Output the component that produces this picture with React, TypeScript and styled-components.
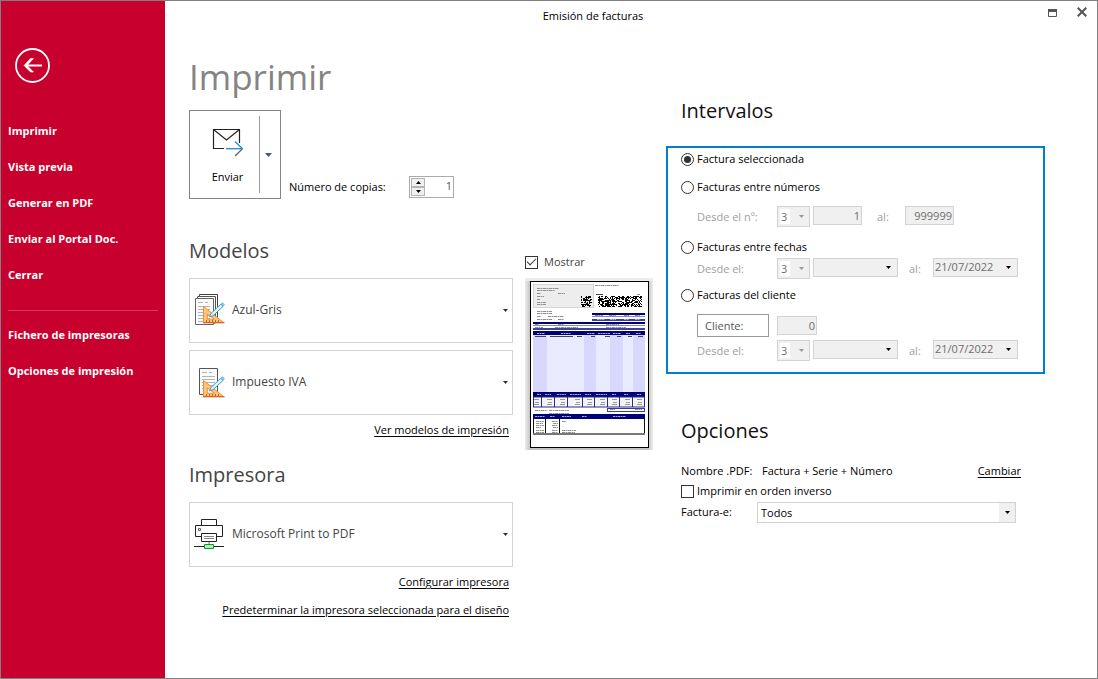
import React from 'react';
import styled, { createGlobalStyle, css } from 'styled-components';

const GlobalStyle = createGlobalStyle`
  *, *::before, *::after { box-sizing: border-box; }
  body {
    margin: 0;
    background: #fff;
    color: #000;
    font: 11px/16px "Open Sans", "Noto Sans", sans-serif;
  }
  button, input, select { font: inherit; color: inherit; margin: 0; }
  h1, h2 { margin: 0; font-weight: 400; }
  svg { display: block; flex: none; }
`;

const Window = styled.div`
  display: flex;
  min-height: 100vh;
  border: 1px solid #808080;
`;

/* Sidebar */
const Sidebar = styled.aside`
  flex: none;
  width: 164px;
  padding: 47px 7px 0;
  background: #c8002d;
  color: #fff;
`;

const BackButton = styled.button`
  display: block;
  width: 35px;
  height: 35px;
  margin: 0 0 30px 7px;
  padding: 0;
  border: 0;
  background: none;
`;

const NavLink = styled.a`
  display: block;
  color: #fff;
  font-weight: 700;
  line-height: 36px;
  text-decoration: none;
`;

const NavDivider = styled.hr`
  height: 1px;
  margin: 17px 0 6px;
  border: 0;
  background: #d63a5c;
`;

/* Main area */
const Main = styled.main`
  flex: 1;
  min-width: 0;
`;

const TitleBar = styled.header`
  display: flex;
  height: 32px;
`;

const WindowTitle = styled.div`
  flex: 1;
  line-height: 30px;
  text-align: center;
`;

const WindowControls = styled.div`
  display: flex;
  justify-content: flex-end;
  width: 76px;
`;

const WindowButton = styled.button`
  display: flex;
  justify-content: center;
  width: 30px;
  height: 24px;
  padding: 6px 0 0;
  border: 0;
  background: none;
`;

const Content = styled.div`
  display: grid;
  grid-template-columns: minmax(0, 1fr) 379px;
  gap: 13px;
  align-items: start;
  padding: 0 52px 24px 24px;
`;

const PrintColumn = styled.section`
  padding-top: 22px;
`;

const RangeColumn = styled.section`
  padding-top: 64px;
`;

const PageTitle = styled.h1`
  color: #848484;
  font-size: 35px;
  line-height: 44px;
`;

const SectionTitle = styled.h2<{ $muted?: boolean }>`
  color: ${(p) => (p.$muted ? '#444' : '#111')};
  font-size: 20px;
  line-height: 28px;
`;

const SendRow = styled.div`
  display: flex;
  align-items: flex-end;
  gap: 8px;
  margin: 11px 0 38px;
`;

const SplitButton = styled.div`
  display: flex;
  align-items: center;
  width: 92px;
  height: 89px;
  border: 1px solid #848484;
`;

const SendButton = styled.button`
  display: flex;
  flex: 1;
  flex-direction: column;
  align-items: center;
  gap: 11px;
  height: 77px;
  padding: 12px 0 0 6px;
  border: 0;
  border-right: 1px solid #999;
  background: none;
`;

const SendMenuButton = styled.button`
  display: flex;
  align-items: center;
  justify-content: center;
  width: 20px;
  height: 77px;
  padding: 0 3px 0 0;
  border: 0;
  background: none;
`;

const Copies = styled.div`
  display: flex;
  align-items: center;
  padding-bottom: 1px;
`;

const CopiesLabel = styled.label`
  width: 120px;
`;

const Spinner = styled.div`
  display: flex;
  align-items: center;
  width: 45px;
  height: 22px;
  padding-left: 1px;
  border: 1px solid #ababab;
`;

const SpinnerButtons = styled.div`
  display: flex;
  flex-direction: column;
  flex: none;
  width: 14px;
`;

const SpinnerButton = styled.button`
  display: flex;
  align-items: center;
  justify-content: center;
  height: 9px;
  padding: 0;
  border: 1px solid #b4b4b4;
  background: #f0f0f0;
`;

const SpinnerInput = styled.input`
  flex: 1;
  width: 0;
  height: 18px;
  padding: 0 1px 4px;
  border: 0;
  color: #555;
  text-align: right;
`;

const PrintLayout = styled.div`
  display: grid;
  grid-template-columns: minmax(0, 1fr) 128px;
  gap: 12px;
  align-items: start;
`;

const Group = styled.section`
  & + & { margin-top: 23px; }
`;

const Cards = styled.div`
  display: grid;
  gap: 7px;
  margin: 13px 0 7px;
`;

const Card = styled.button`
  display: flex;
  align-items: center;
  gap: 6px;
  height: 65px;
  padding: 0 4px 1px;
  border: 1px solid #d3d3d3;
  background: #fff;
  color: #444;
  text-align: left;
`;

const CardName = styled.span`
  flex: 1;
  font-size: 12px;
`;

const Links = styled.div`
  display: flex;
  flex-direction: column;
  align-items: flex-end;
  gap: 12px;
  padding-right: 4px;
`;

const Link = styled.a`
  color: #000;
  text-decoration: underline;
  text-underline-offset: 2px;
`;

const Preview = styled.div`
  display: grid;
  gap: 8px;
  padding-top: 17px;
`;

const box = css`
  appearance: none;
  display: grid;
  place-content: center;
  flex: none;
  width: 13px;
  height: 13px;
  border: 1px solid #333;
  background: #fff;
`;

const Checkbox = styled.input.attrs({ type: 'checkbox' })`
  ${box}
  &:checked::before {
    content: '';
    width: 9px;
    height: 5px;
    margin-top: -3px;
    border: solid #333;
    border-width: 0 0 1px 1px;
    transform: rotate(-45deg);
  }
`;

const Radio = styled.input.attrs({ type: 'radio' })`
  ${box}
  border-radius: 50%;
  &:checked::before {
    content: '';
    width: 7px;
    height: 7px;
    border-radius: 50%;
    background: #333;
  }
`;

const CheckLabel = styled.label<{ $wide?: boolean }>`
  display: flex;
  align-items: center;
  gap: ${(p) => (p.$wide ? 6 : 3)}px;
  color: ${(p) => (p.$wide ? '#444' : '#000')};
`;

/* Ranges */
const RangeHeading = styled.div`
  padding-left: 15px;
`;

const RangeBox = styled.fieldset`
  min-width: 0;
  margin: 21px 0 43px;
  padding: 1px 12px 11px 13px;
  border: 2px solid #0080c8;
`;

const Choice = styled.div<{ $before?: number; $after?: number }>`
  display: flex;
  height: 20px;
  margin: ${(p) => p.$before || 0}px 0 ${(p) => p.$after || 0}px;
`;

const FieldRow = styled.div`
  display: flex;
  align-items: flex-start;
  height: 21px;
  padding-left: 16px;
  color: #a0a0a0;
`;

const ClientRow = styled(FieldRow)`
  height: 23px;
  margin-bottom: 3px;
  gap: 8px;
`;

const RangeLabel = styled.label`
  width: 80px;
  line-height: 22px;
`;

const ToLabel = styled.label<{ $wide?: boolean }>`
  width: ${(p) => (p.$wide ? 43 : 35)}px;
  padding-left: ${(p) => (p.$wide ? 15 : 11)}px;
  line-height: 22px;
`;

const ClientButton = styled.button`
  width: 72px;
  height: 23px;
  padding: 0 7px;
  border: 1px solid #999;
  background: #fff;
  color: #555;
  text-align: left;
`;

const NumberInput = styled.input<{ $w: number }>`
  width: ${(p) => p.$w}px;
  height: 19px;
  margin-top: ${(p) => (p.$w === 40 ? 2 : 0)}px;
  padding: 0 1px 1px;
  border: 1px solid #d3d3d3;
  background: #f0f0f0;
  color: #6d6d6d;
  text-align: right;
`;

const SelectFrame = styled.div<{ $kind: 'series' | 'date' | 'full' }>`
  display: grid;
  align-items: center;
  & > * { grid-area: 1 / 1; }
  & > svg { justify-self: end; pointer-events: none; }
  ${(p) => p.$kind === 'series' && css`width: 33px; height: 21px; margin-right: 3px; & > svg { margin-right: 6px; }`}
  ${(p) => p.$kind === 'date' && css`width: 85px; height: 19px; & > svg { margin-right: 7px; }`}
  ${(p) => p.$kind === 'full' && css`flex: 1; height: 21px; & > svg { margin-right: 6px; }`}
`;

const Select = styled.select<{ $kind: 'series' | 'date' | 'full' }>`
  appearance: none;
  width: 100%;
  height: 100%;
  padding: 0 3px;
  border: 1px solid #d3d3d3;
  border-radius: 0;
  background: #f0f0f0;
  color: #6d6d6d;
  opacity: 1;
  ${(p) => p.$kind === 'series' && css`
    background: linear-gradient(#fff, #fff) 2px 2px / 10px 15px no-repeat #f0f0f0;
  `}
  ${(p) => p.$kind === 'date' && css`padding: 0 1px 1px;`}
  ${(p) => p.$kind === 'full' && css`
    padding: 1px 3px 0;
    background: linear-gradient(#f0f0f0, #f0f0f0) right / 16px 100% no-repeat #fff;
    color: #000;
  `}
`;

/* Options */
const Options = styled.section`
  padding: 0 24px 0 15px;
`;

const OptionRows = styled.div`
  display: grid;
  grid-template-rows: 20px 20px 22px;
  align-items: center;
  margin-top: 16px;
`;

const OptionRow = styled.div`
  display: flex;
  align-items: center;
`;

const OptionLabel = styled.label<{ $w: number }>`
  width: ${(p) => p.$w}px;
`;

const OptionValue = styled.span`
  flex: 1;
`;

const SelectSpace = styled(OptionRow)`
  padding-right: 5px;
`;

function Caret({ color = '#000', w = 5 }: { color?: string; w?: number }) {
  const h = (w + 1) / 2;
  return (
    <svg width={w} height={h} viewBox={`0 0 ${w} ${h}`} aria-hidden="true">
      <path d={`M0 0H${w}L${w / 2} ${h}Z`} fill={color} />
    </svg>
  );
}

function BackIcon() {
  return (
    <svg width="35" height="35" viewBox="0 0 35 35" fill="none" stroke="#fff" aria-hidden="true">
      <circle cx="17.5" cy="17.5" r="16.5" strokeWidth="1.8" />
      <path d="M27 17.5H11" strokeWidth="2" />
      <path d="M18.5 10.5h-3L9 17.5l6.500 6.500h3l-6.500-6.500z" fill="#fff" strokeWidth=".6" />
    </svg>
  );
}

function EnvelopeIcon() {
  return (
    <svg width="32" height="30" viewBox="0 0 32 30" fill="none" aria-hidden="true">
      <path d="M12 20.500H1.500V1.500H27.500V15" stroke="#222" strokeWidth="1.200" />
      <path d="M1.500 1.500L14.500 12L27.500 1.500" stroke="#222" strokeWidth="1.200" />
      <path d="M23 13.500L30.500 20.700" stroke="#1a8fd0" strokeWidth="1.300" />
      <path d="M14 20.700H30.500" stroke="#1a8fd0" strokeWidth="1.300" />
      <path d="M30.500 20.700L23 28" stroke="#666" strokeWidth="1.300" />
    </svg>
  );
}

function DesignTools() {
  return (
    <>
      <path
        fillRule="evenodd"
        d="M9.500 12.500V28.500H29.500ZM13.300 20V25.200H20.500Z"
        fill="#fdc57b"
        stroke="#f09030"
      />
      <path d="M9 28.700H30.500" stroke="#d8601c" strokeWidth="1.200" />
      <path d="M12.500 28v-2M15.500 28v-2M18.500 28v-2M21.500 28v-2M24.500 28v-2" stroke="#b06a28" />
      <path d="M15.500 22.800L17 19.500L26.800 10.200L29 12.400L19 21.800Z" fill="#dff1fb" stroke="#3a9bd3" />
      <path d="M27 10l1.500-1.200 2 1.900-1.400 1.500z" fill="#8fd0f0" stroke="#3a9bd3" strokeWidth=".6" />
    </>
  );
}

function PageStackIcon() {
  return (
    <svg width="32" height="32" viewBox="0 0 32 32" fill="none" aria-hidden="true">
      <path d="M5.500 2.500V.5H23.500V27.500H22" fill="#fff" stroke="#444" />
      <path d="M3.500 4V2.500H21.500V29H20" fill="#fff" stroke="#555" />
      <path d="M1.500 4.500H19.500V30.500H1.500Z" fill="#fafafa" stroke="#666" />
      <path d="M4 8.500h5m2 0h3M4 12.500h12M4 15.500h12M4 18.500h12M4 21.500h12M4 24.500h12M4 27.500h5" stroke="#b4b4b4" />
      <DesignTools />
    </svg>
  );
}

function PageIcon() {
  return (
    <svg width="32" height="32" viewBox="0 0 32 32" fill="none" aria-hidden="true">
      <path d="M5.500 2.500H23.500V28.500H5.500Z" fill="#fafafa" stroke="#555" />
      <path d="M8 6.500h5m2 0h3M8 10.500h13M8 13.500h13M8 16.500h13M8 19.500h13M8 22.500h13" stroke="#b4b4b4" />
      <g transform="translate(0 2)"><DesignTools /></g>
    </svg>
  );
}

function PrinterIcon() {
  return (
    <svg width="32" height="32" viewBox="0 0 32 32" fill="none" aria-hidden="true">
      <path d="M7.500 7.500V1.500H22.500V7.500" stroke="#222" />
      <path d="M7 18.500H1.500V7.500H28.500V18.500H23" stroke="#222" />
      <path d="M7.500 15.500H22.500V23.500H7.500Z" fill="#fff" stroke="#222" />
      <path d="M10 18.500H20M10 20.500H20" stroke="#888" />
      <path d="M4.500 10.500h2v2h-2z" stroke="#666" />
      <path d="M15 24v3" stroke="#bbb" strokeWidth="2" />
      <path d="M0 28.500H30" stroke="#222" />
      <path d="M10.500 26.500H19.500V30.500H10.500Z" fill="#b8ecc4" stroke="#0a9a2c" />
    </svg>
  );
}

/* Dense block of modules, as in a printed 2D code */
function codePath(cols: number, rows: number, seed: number) {
  let s = seed;
  let d = '';
  for (let y = 0; y < rows; y++) {
    for (let x = 0; x < cols; x++) {
      s = (s * 1103515245 + 12345) % 2147483648;
      if (s / 2147483648 < 0.6) d += `M${x} ${y}h1v1h-1z`;
    }
  }
  return d;
}

const textLines: Array<[number, number, number]> = [
  [12, 10, 22], [12, 12, 18], [12, 15, 4], [33, 15, 7], [12, 18, 7], [12, 21, 3], [12, 24, 9], [12, 26, 9],
  [70, 7, 24], [112, 16, 3],
  [12, 33, 15], [12, 35, 15], [12, 38, 4], [23, 38, 16], [12, 41, 15], [33, 41, 6],
  [70, 37, 8], [84, 37, 7], [99, 37, 5], [110, 37, 5],
  [10, 46, 4], [33, 46, 6], [81, 46, 13], [10, 49, 8], [30, 49, 23], [81, 49, 20],
  [10, 132, 12], [24, 132, 20], [24, 135, 20], [85, 131, 5], [110, 131, 7],
  [11, 143, 8], [11, 145, 7], [11, 147, 8], [11, 149, 5], [11, 152, 8], [11, 154, 8],
  [27, 143, 6], [28, 145, 5], [27, 147, 6], [28, 149, 5], [27, 152, 6], [27, 154, 6],
  [37, 143, 4], [37, 152, 14], [37, 154, 13],
];
const darkLines: Array<[number, number, number]> = [
  [71, 16, 7],
  [10, 58, 11], [25, 58, 23], [52, 58, 5], [66, 58, 4], [80, 58, 5], [92, 58, 4], [103, 58, 4], [113, 58, 5],
];
const headerMarks: Array<[number, number, number]> = [
  [12, 55, 8], [36, 55, 10], [62, 55, 8], [73, 55, 12], [88, 55, 8], [101, 55, 4], [111, 55, 5],
  [12, 116, 4], [20, 116, 6], [32, 116, 9], [45, 116, 11], [60, 116, 6], [71, 116, 11], [87, 116, 4], [99, 116, 4], [112, 116, 4],
  [10, 138, 10], [25, 138, 5], [37, 138, 9], [57, 138, 5], [88, 138, 13],
  [72, 41, 8], [85, 41, 6], [99, 41, 5], [110, 41, 5],
];
const cells = [16, 29, 42, 57, 69, 82, 94, 107, 119];
const bands: Array<[number, number, string]> = [
  [8, 14, '#d8d8ff'], [22, 37, '#ebebff'], [59, 12, '#d8d8ff'], [71, 14, '#ebebff'],
  [85, 13, '#d8d8ff'], [98, 10, '#ebebff'], [108, 12, '#d8d8ff'],
];
const marks = (lines: Array<[number, number, number]>) =>
  lines.map(([x, y, w]) => `M${x} ${y}.500h${w}`).join('');

function InvoicePreview() {
  return (
    <svg width="128" height="172" viewBox="0 0 128 172" role="img" aria-label="Vista del modelo">
      <defs>
        <linearGradient id="edge">
          <stop offset="0" stopColor="#ececec" />
          <stop offset=".04" stopColor="#c4c4c4" />
          <stop offset=".96" stopColor="#c4c4c4" />
          <stop offset="1" stopColor="#ececec" />
        </linearGradient>
      </defs>
      <rect width="128" height="172" fill="url(#edge)" />
      <rect width="128" height="3" fill="#ececec" />
      <rect x="5.5" y="3.5" width="118" height="166" fill="#fff" stroke="#000" />
      <rect x="8.5" y="6.500" width="60" height="23" fill="#ededed" stroke="#d4d4d4" />
      <path d={codePath(11, 11, 77)} transform="translate(56 18)" />
      <path d={codePath(44, 11, 912)} transform="translate(73 18)" />
      <path d="M67 36H120M8 45H120" stroke="#000078" strokeWidth="2" />
      <path d="M67 38.500H120M8 47.500H120" stroke="#8484cc" />
      <path d="M67 42H120" stroke="#3c3ca0" strokeWidth="2" />
      <rect x="8" y="50" width="112" height="2" fill="#4040a0" />
      <rect x="8" y="53" width="112" height="4" fill="#000078" />
      {bands.map(([x, w, fill]) => <rect key={x} x={x} y="57" width={w} height="58" fill={fill} />)}
      <rect x="8" y="114" width="112" height="5" fill="#000078" />
      <rect x="8.500" y="119" width="111" height="10" fill="#f4f4f4" stroke="#2a2a8c" />
      {cells.slice(0, -1).map((x) => <path key={x} d={`M${x}.500 119v10`} stroke="#2a2a8c" />)}
      <path d={cells.map((x) => `M${x - 7} 121.500h5M${x - 6} 124.500h4M${x - 7} 126.500h5`).join('')} stroke="#999" />
      <rect x="82.500" y="130.500" width="37" height="3" fill="#fff" stroke="#3c3ca0" />
      <rect x="8" y="136" width="112" height="5" fill="#000078" />
      <path d="M8.500 141V156H119.500V141M20.500 141v15M34.500 141v15" fill="none" stroke="#111" />
      <path d="M8 156H120" stroke="#777" strokeWidth="2" />
      <path d={marks(textLines)} stroke="#909090" strokeDasharray="3 .5 2 .5" />
      <path d={marks(darkLines)} stroke="#444" />
      <path d={marks(headerMarks)} stroke="#a8a8d8" strokeDasharray="2 .5" />
    </svg>
  );
}

function SeriesSelect({ label }: { label: string }) {
  return (
    <SelectFrame $kind="series">
      <Select $kind="series" disabled aria-label={label}><option>3</option></Select>
      <Caret color="#999" />
    </SelectFrame>
  );
}

function DateSelect({ id, value = '' }: { id: string; value?: string }) {
  return (
    <SelectFrame $kind="date">
      <Select $kind="date" id={id} disabled><option>{value}</option></Select>
      <Caret />
    </SelectFrame>
  );
}

function DateRange({ name }: { name: string }) {
  return (
    <FieldRow>
      <RangeLabel htmlFor={`${name}-from`}>Desde el:</RangeLabel>
      <SeriesSelect label="Serie" />
      <DateSelect id={`${name}-from`} />
      <ToLabel htmlFor={`${name}-to`}>al:</ToLabel>
      <DateSelect id={`${name}-to`} value="21/07/2022" />
    </FieldRow>
  );
}

function RangeChoice({ text, checked, before, after }: { text: string; checked?: boolean; before?: number; after?: number }) {
  return (
    <Choice $before={before} $after={after}>
      <CheckLabel><Radio name="range" defaultChecked={checked} />{text}</CheckLabel>
    </Choice>
  );
}

function CardButton({ icon, name }: { icon: React.ReactNode; name: string }) {
  return (
    <Card type="button">
      {icon}
      <CardName>{name}</CardName>
      <Caret color="#333" />
    </Card>
  );
}

export default function App() {
  return (
    <Window>
      <GlobalStyle />
      <Sidebar>
        <BackButton type="button" aria-label="Volver"><BackIcon /></BackButton>
        <nav>
          {['Imprimir', 'Vista previa', 'Generar en PDF', 'Enviar al Portal Doc.', 'Cerrar'].map((t) => (
            <NavLink key={t} href="#">{t}</NavLink>
          ))}
          <NavDivider />
          {['Fichero de impresoras', 'Opciones de impresión'].map((t) => (
            <NavLink key={t} href="#">{t}</NavLink>
          ))}
        </nav>
      </Sidebar>
      <Main>
        <TitleBar>
          <WindowTitle>Emisión de facturas</WindowTitle>
          <WindowControls>
            <WindowButton type="button" aria-label="Maximizar">
              <svg width="10" height="11" viewBox="0 0 10 11" aria-hidden="true">
                <path d="M1.500 2.500h8v7h-8z" fill="none" stroke="#555" />
                <path d="M1 2h9v3H1z" fill="#555" />
              </svg>
            </WindowButton>
            <WindowButton type="button" aria-label="Cerrar">
              <svg width="10" height="10" viewBox="0 0 10 10" aria-hidden="true">
                <path d="M.7.7l8.600 8.600M9.300.7L.7 9.300" stroke="#555" strokeWidth="2" />
              </svg>
            </WindowButton>
          </WindowControls>
        </TitleBar>
        <Content>
          <PrintColumn>
            <PageTitle>Imprimir</PageTitle>
            <SendRow>
              <SplitButton>
                <SendButton type="button"><EnvelopeIcon />Enviar</SendButton>
                <SendMenuButton type="button" aria-label="Más opciones de envío"><Caret color="#44568c" w={7} /></SendMenuButton>
              </SplitButton>
              <Copies>
                <CopiesLabel htmlFor="copies">Número de copias:</CopiesLabel>
                <Spinner>
                  <SpinnerButtons>
                    <SpinnerButton type="button" aria-label="Más">
                      <svg width="5" height="3" viewBox="0 0 5 3" aria-hidden="true"><path d="M0 3H5L2.500 0Z" /></svg>
                    </SpinnerButton>
                    <SpinnerButton type="button" aria-label="Menos"><Caret /></SpinnerButton>
                  </SpinnerButtons>
                  <SpinnerInput id="copies" defaultValue="1" />
                </Spinner>
              </Copies>
            </SendRow>
            <PrintLayout>
              <div>
                <Group>
                  <SectionTitle $muted>Modelos</SectionTitle>
                  <Cards>
                    <CardButton icon={<PageStackIcon />} name="Azul-Gris" />
                    <CardButton icon={<PageIcon />} name="Impuesto IVA" />
                  </Cards>
                  <Links><Link href="#">Ver modelos de impresión</Link></Links>
                </Group>
                <Group>
                  <SectionTitle $muted>Impresora</SectionTitle>
                  <Cards>
                    <CardButton icon={<PrinterIcon />} name="Microsoft Print to PDF" />
                  </Cards>
                  <Links>
                    <Link href="#">Configurar impresora</Link>
                    <Link href="#">Predeterminar la impresora seleccionada para el diseño</Link>
                  </Links>
                </Group>
              </div>
              <Preview>
                <CheckLabel $wide><Checkbox defaultChecked />Mostrar</CheckLabel>
                <InvoicePreview />
              </Preview>
            </PrintLayout>
          </PrintColumn>
          <RangeColumn>
            <RangeHeading><SectionTitle>Intervalos</SectionTitle></RangeHeading>
            <RangeBox>
              <RangeChoice text="Factura seleccionada" checked />
              <RangeChoice text="Facturas entre números" before={8} after={9} />
              <FieldRow>
                <RangeLabel htmlFor="number-from">Desde el nº:</RangeLabel>
                <SeriesSelect label="Serie" />
                <NumberInput id="number-from" $w={49} defaultValue="1" disabled />
                <ToLabel htmlFor="number-to" $wide>al:</ToLabel>
                <NumberInput id="number-to" $w={49} defaultValue="999999" disabled />
              </FieldRow>
              <RangeChoice text="Facturas entre fechas" before={10} after={1} />
              <DateRange name="dates" />
              <RangeChoice text="Facturas del cliente" before={6} after={9} />
              <ClientRow>
                <ClientButton type="button">Cliente:</ClientButton>
                <NumberInput $w={40} defaultValue="0" disabled aria-label="Cliente" />
              </ClientRow>
              <DateRange name="client" />
            </RangeBox>
            <Options>
              <SectionTitle>Opciones</SectionTitle>
              <OptionRows>
                <OptionRow>
                  <OptionLabel as="span" $w={81}>Nombre .PDF:</OptionLabel>
                  <OptionValue>Factura + Serie + Número</OptionValue>
                  <Link href="#">Cambiar</Link>
                </OptionRow>
                <CheckLabel><Checkbox />Imprimir en orden inverso</CheckLabel>
                <SelectSpace>
                  <OptionLabel $w={76} htmlFor="einvoice">Factura-e:</OptionLabel>
                  <SelectFrame $kind="full">
                    <Select $kind="full" id="einvoice"><option>Todos</option></Select>
                    <Caret />
                  </SelectFrame>
                </SelectSpace>
              </OptionRows>
            </Options>
          </RangeColumn>
        </Content>
      </Main>
    </Window>
  );
}
